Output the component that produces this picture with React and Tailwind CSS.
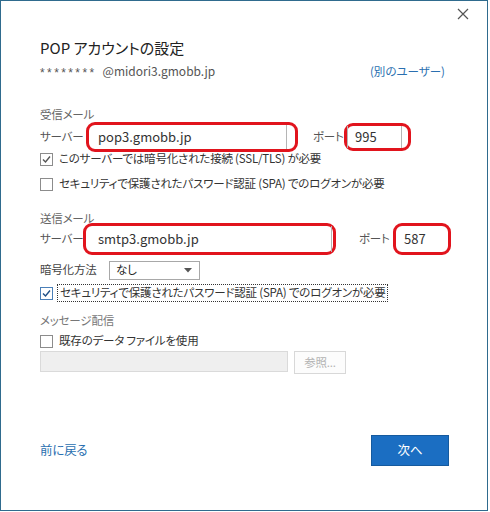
import React from "react";

const jp = { fontFamily: '"Noto Sans CJK JP", "Noto Sans", sans-serif', fontFeatureSettings: "'palt'" };

function Check({ checked, blue }) {
  return (
    <span className={"w-[13px] h-[13px] border bg-white flex items-center justify-center shrink-0 " + (blue ? "border-[#4a7fb8]" : "border-[#8c8c8c]")}>
      {checked && (
        <svg width="11" height="11" viewBox="0 0 11 11">
          <path d="M2 5.5 L4.5 8 L9 2.5" fill="none" stroke={blue ? "#1f4f86" : "#555"} strokeWidth="1.4" />
        </svg>
      )}
    </span>
  );
}

function Red({ w, h, children, inner }) {
  return (
    <div className={"shrink-0 border-[3px] border-[#e1141d] rounded-[9px] bg-white flex items-center " + w + " " + h}>
      <div className={"flex items-center h-full " + inner}>{children}</div>
    </div>
  );
}

export default function App() {
  return (
    <div className="w-[490px] h-[512px] bg-white text-[11.5px] tracking-[-0.2px] text-[#444] whitespace-nowrap" style={jp}>
      <div className="relative w-[488px] h-[511px] border border-[#2f6b8e] flex flex-col pl-[39px]">
        <span className="absolute right-[18px] top-[7px]">
          <svg width="12" height="12" viewBox="0 0 12 12"><path d="M1 1 L11 11 M11 1 L1 11" stroke="#555" strokeWidth="1.2" /></svg>
        </span>
        <div className="mt-[37px] h-[20px] leading-[20px] text-[15px] tracking-normal text-[#222]">POP アカウントの設定</div>
        <div className="mt-[4px] h-[18px] leading-[18px] flex items-center text-[12px] tracking-normal text-[#555]">
          <span className="tracking-[2.4px] text-[12px] font-['Liberation_Sans',sans-serif] pt-[3px]">********</span>
          <span className="ml-[6px]">@midori3.gmobb.jp</span>
          <span className="ml-auto mr-[42px] text-[11.5px] text-[#2a6fb0]">(別のユーザー)</span>
        </div>

        <div className="mt-[26px] h-[16px] leading-[16px] text-[#666]">受信メール</div>
        <div className="mt-[2px] h-[26px] flex items-center">
          <span className="w-[46px] shrink-0 text-[#555]">サーバー</span>
          <Red w="w-[212px]" h="h-[30px]" inner="pl-[9px] w-[198px] border-r border-[#b5b5b5]">
            <span className="text-[13px] tracking-normal text-[#333]">pop3.gmobb.jp</span>
          </Red>
          <span className="ml-[15px] w-[31px] shrink-0 text-[#555]">ポート</span>
          <Red w="w-[67px]" h="h-[28px]" inner="pl-[7px] w-[55px] border-r border-l border-[#b5b5b5]">
            <span className="text-[13px] tracking-normal text-[#333]">995</span>
          </Red>
        </div>
        <div className="mt-[1px] h-[16px] flex items-center">
          <Check checked />
          <span className="ml-[6px] text-[#333]">このサーバーでは暗号化された接続 (SSL/TLS) が必要</span>
        </div>
        <div className="mt-[9px] h-[16px] flex items-center">
          <Check />
          <span className="ml-[6px] text-[#333]">セキュリティで保護されたパスワード認証 (SPA) でのログオンが必要</span>
        </div>

        <div className="mt-[18px] h-[16px] leading-[16px] text-[#666]">送信メール</div>
        <div className="h-[26px] flex items-center">
          <span className="w-[43px] shrink-0 text-[#555]">サーバー</span>
          <Red w="w-[253px]" h="h-[32px]" inner="pl-[12px] w-[246px] border-r border-[#b5b5b5]">
            <span className="text-[13px] tracking-normal text-[#333]">smtp3.gmobb.jp</span>
          </Red>
          <span className="ml-[23px] w-[34px] shrink-0 text-[#555]">ポート</span>
          <Red w="w-[58px]" h="h-[32px]" inner="pl-[8px] w-[50px]">
            <span className="text-[13px] tracking-normal text-[#333]">587</span>
          </Red>
        </div>
        <div className="mt-[9px] h-[18px] flex items-center">
          <span className="w-[69px] shrink-0 text-[#444]">暗号化方法</span>
          <div className="w-[91px] h-[19px] border border-[#a8a8a8] flex items-center pl-[6px] pr-[7px]">
            <span className="text-[#222]">なし</span>
            <svg className="ml-auto" width="8" height="5" viewBox="0 0 8 5"><path d="M0 0 L8 0 L4 4.5 Z" fill="#555" /></svg>
          </div>
        </div>
        <div className="mt-[5px] h-[18px] flex items-center">
          <Check checked blue />
          <span className="ml-[4px] h-[18px] px-[2px] border border-dotted border-[#333] flex items-center text-[#333]">セキュリティで保護されたパスワード認証 (SPA) でのログオンが必要</span>
        </div>

        <div className="mt-[10px] h-[16px] leading-[16px] text-[#777]">メッセージ配信</div>
        <div className="mt-[5px] h-[16px] flex items-center">
          <Check />
          <span className="ml-[6px] text-[#333]">既存のデータ ファイルを使用</span>
        </div>
        <div className="mt-[2px] h-[23px] flex items-start">
          <div className="w-[248px] h-[21px] bg-[#efefef] border border-[#dadada]"></div>
          <div className="ml-[6px] w-[52px] h-[23px] border border-[#d8d8d8] bg-[#fcfcfc] flex items-center justify-center text-[#b3b3b3]">参照...</div>
        </div>

        <div className="mt-[61px] h-[31px] flex items-center">
          <span className="text-[12.5px] text-[#2a6fb0]">前に戻る</span>
          <div className="ml-auto mr-[38px] w-[78px] h-[31px] bg-[#1b6ec2] border border-[#155a9e] flex items-center justify-center text-white text-[12.5px]">次へ</div>
        </div>
      </div>
    </div>
  );
}
